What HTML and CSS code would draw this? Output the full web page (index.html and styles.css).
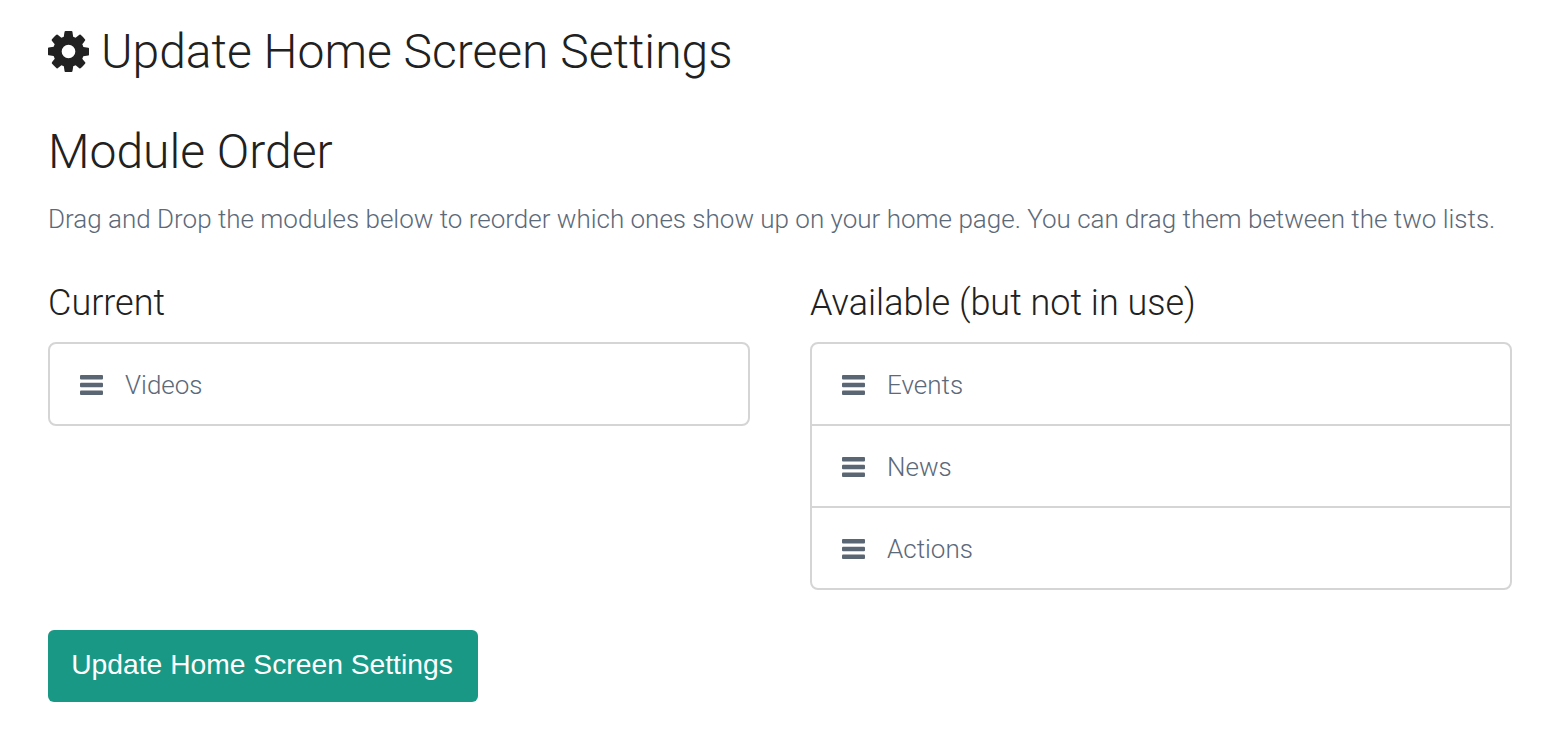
FILE: index.html
```html
<!DOCTYPE html>
<html lang="en">
<head>
<meta charset="utf-8">
<title>Update Home Screen Settings</title>
<link rel="stylesheet" href="styles.css">
</head>
<body>
<main class="page">
  <h1 class="title">
    <svg class="gear" viewBox="128 128 1536 1536" aria-hidden="true"><path d="M1152 896q0-106-75-181t-181-75-181 75-75 181 75 181 181 75 181-75 75-181zm512-109v222q0 12-8 23t-20 13l-185 28q-19 54-39 91 35 50 107 138 10 12 10 25t-9 23q-27 37-99 108t-94 71q-12 0-26-9l-138-108q-44 23-91 38-16 136-29 186-7 28-36 28h-222q-14 0-24.500-8.500t-11.500-21.500l-28-184q-49-16-90-37l-141 107q-10 9-25 9-14 0-25-11-126-114-165-168-7-10-7-23 0-12 8-23 15-21 51-66.500t54-70.500q-27-50-41-99l-183-27q-13-2-21-12.500t-8-23.500v-222q0-12 8-23t19-13l186-28q14-46 39-92-40-57-107-138-10-12-10-24 0-10 9-23 26-36 98.500-107.500t94.500-71.500q13 0 26 10l138 107q44-23 91-38 16-136 29-186 7-28 36-28h222q14 0 24.500 8.500t11.500 21.500l28 184q49 16 90 37l142-107q9-9 24-9 13 0 25 10 129 119 165 170 7 8 7 22 0 12-8 23-15 21-51 66.500t-54 70.500q26 50 41 98l183 28q13 2 21 12.500t8 23.500z"/></svg>
    <span>Update Home Screen Settings</span>
  </h1>
  <h2 class="section">Module Order</h2>
  <p class="lead">Drag and Drop the modules below to reorder which ones show up on your home page. You can drag them between the two lists.</p>
  <div class="columns">
    <section>
      <h3 class="list-title">Current</h3>
      <ul class="list">
        <li class="item"><svg class="bars" viewBox="0 0 23 20" aria-hidden="true"><rect width="23" height="4.500" y="0" rx="1"/><rect width="23" height="4.500" y="7.750" rx="1"/><rect width="23" height="4.500" y="15.500" rx="1"/></svg>Videos</li>
      </ul>
    </section>
    <section>
      <h3 class="list-title">Available (but not in use)</h3>
      <ul class="list">
        <li class="item"><svg class="bars" viewBox="0 0 23 20" aria-hidden="true"><rect width="23" height="4.500" y="0" rx="1"/><rect width="23" height="4.500" y="7.750" rx="1"/><rect width="23" height="4.500" y="15.500" rx="1"/></svg>Events</li>
        <li class="item"><svg class="bars" viewBox="0 0 23 20" aria-hidden="true"><rect width="23" height="4.500" y="0" rx="1"/><rect width="23" height="4.500" y="7.750" rx="1"/><rect width="23" height="4.500" y="15.500" rx="1"/></svg>News</li>
        <li class="item"><svg class="bars" viewBox="0 0 23 20" aria-hidden="true"><rect width="23" height="4.500" y="0" rx="1"/><rect width="23" height="4.500" y="7.750" rx="1"/><rect width="23" height="4.500" y="15.500" rx="1"/></svg>Actions</li>
      </ul>
    </section>
  </div>
  <button class="submit" type="button">Update Home Screen Settings</button>
</main>
</body>
</html>
```

FILE: styles.css
```css
* { box-sizing: border-box; }
html, body { margin: 0; padding: 0; background: #fff; }
body { font-family: Roboto, "Open Sans", sans-serif; font-weight: 300; color: #212121; }
.page { padding: 24px 52px 0 48px; display: flex; flex-direction: column; align-items: stretch; }
.title { display: flex; align-items: center; gap: 12px; margin: 0; height: 56px; font-size: 48px; line-height: 56px; font-weight: 300; color: #212121; }
.gear { width: 41px; height: 41px; fill: #212121; flex: none; margin-top: -1px; }
.section { margin: 45px 0 0; height: 54px; font-size: 48px; line-height: 54px; font-weight: 300; }
.lead { margin: 25px 0 0; font-size: 26px; line-height: 30px; color: #5c6979; }
.columns { display: grid; grid-template-columns: 702px 702px; column-gap: 60px; margin-top: 49px; }
.list-title { margin: 0 0 19px; height: 40px; font-size: 36px; line-height: 40px; font-weight: 300; }
.list { list-style: none; margin: 0; padding: 0; border: 2px solid #d5d5d5; border-radius: 8px; }
.item { display: flex; align-items: center; height: 82px; padding: 2px 0 0 30px; font-size: 26px; color: #5c6979; border-top: 2px solid #d5d5d5; }
.item:first-child { border-top: 0; height: 80px; }
.bars { width: 23px; height: 20px; fill: #5a6673; margin-right: 22px; flex: none; }
.submit { align-self: flex-start; width: 430px; height: 72px; margin-top: 40px; padding: 0 2px 3px 0; border: 0; border-radius: 6px; background: #189885; color: #fff; font-family: "Liberation Sans", Arial, sans-serif; font-size: 28.25px; font-weight: 400; }
```
